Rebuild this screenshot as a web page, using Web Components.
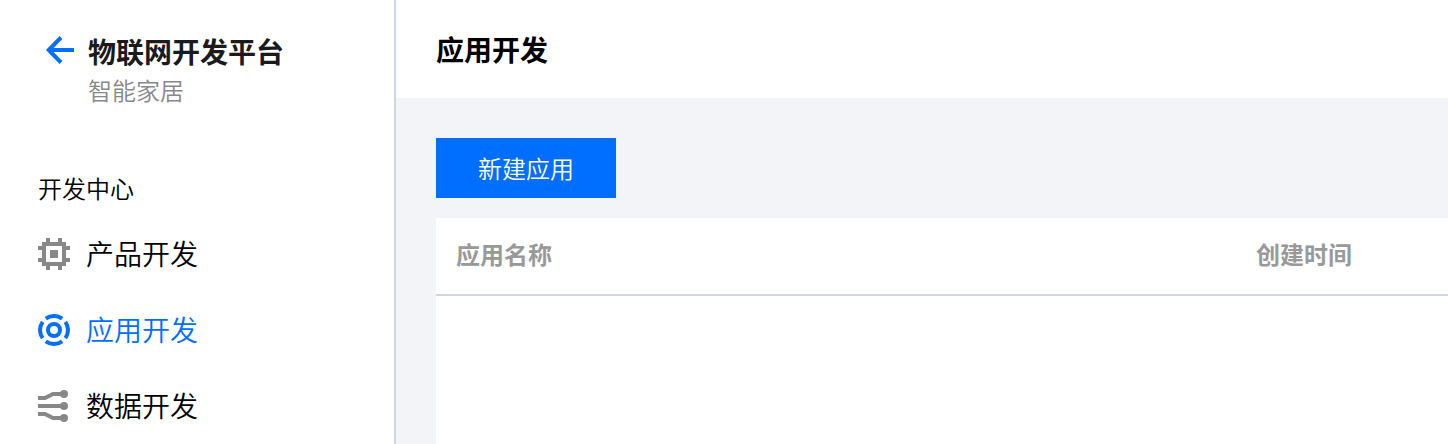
<!DOCTYPE html>
<html lang="zh-CN">
<head>
<meta charset="utf-8">
<title>应用开发</title>
<style>
html,body{margin:0;height:100%;overflow:hidden;background:#fff;font-family:"Noto Sans CJK SC",sans-serif;color:#000}
</style>
</head>
<body>
<iot-console></iot-console>
<script>
const define = (name, html) => customElements.define(name, class extends HTMLElement {
  constructor() {
    super();
    this.attachShadow({mode: 'open'}).innerHTML = html;
  }
});

define('side-header', `
<style>
:host{display:flex;height:106px;box-sizing:border-box;padding:33px 0 0 44px}
svg{display:block;width:32px;height:32px;margin:1px 12px 0 0;flex:none}
h1{margin:0;font-size:28px;line-height:36px;font-weight:700;color:#1b1b1b;white-space:nowrap}
p{margin:4px 0 0;font-size:24px;line-height:34px;font-weight:350;color:#888}
</style>
<svg viewBox="0 0 32 32" fill="none" stroke="#006eff" stroke-width="4"><path d="M30 16H5M17 3.5L4.7 16L17 28.5"/></svg>
<div><h1><slot></slot></h1><p><slot name="sub"></slot></p></div>`);

const icons = {
  chip: '<path fill="currentColor" fill-rule="evenodd" d="M8 0h4v4h8V0h4v4h4v4h4v4h-4v8h4v4h-4v4h-4v4h-4v-4h-8v4H8v-4H4v-4H0v-4h4v-8H0V8h4V4h4zM8 8v16h16V8zM12 12h8v8h-8z"/>',
  target: '<g fill="none" stroke="currentColor" stroke-width="4"><circle cx="16" cy="16" r="6"/><path d="M7.8 4.65A14 14 0 0 1 24.2 4.65M27.35 7.8A14 14 0 0 1 27.35 24.2M24.2 27.35A14 14 0 0 1 7.8 27.35M4.65 24.2A14 14 0 0 1 4.65 7.8"/></g>',
  data: '<path fill="none" stroke="currentColor" stroke-width="4" d="M0 8H7L15 4H26M0 16H26M0 24H7L15 28H26"/><g fill="currentColor"><circle cx="26" cy="4" r="4"/><circle cx="26" cy="16" r="4"/><circle cx="26" cy="28" r="4"/></g>'
};

customElements.define('nav-item', class extends HTMLElement {
  constructor() {
    super();
    this.attachShadow({mode: 'open'}).innerHTML = `
<style>
:host{display:flex;align-items:center;height:76px;padding-left:38px;font-size:28px;line-height:40px}
:host([active]){color:#006eff}
svg{width:32px;height:32px;margin-right:16px;color:#888}
:host([active]) svg{color:#006eff}
span{padding-bottom:2px}
</style>
<svg viewBox="0 0 32 32">${icons[this.getAttribute('icon')] || ''}</svg><span><slot></slot></span>`;
  }
});

define('side-nav', `
<style>
:host{display:block;flex:none;width:396px;box-sizing:border-box;border-right:2px solid #cfd5de;background:#fff}
h2{margin:65px 0 0;padding-left:38px;font-size:24px;line-height:34px;font-weight:350;height:45px;box-sizing:border-box}
nav{font-weight:350}
</style>
<side-header>物联网开发平台<span slot="sub">智能家居</span></side-header>
<h2>开发中心</h2>
<nav><nav-item icon="chip">产品开发</nav-item><nav-item icon="target" active>应用开发</nav-item><nav-item icon="data">数据开发</nav-item></nav>`);

define('page-header', `
<style>
:host{display:flex;align-items:center;height:98px;background:#fff;padding-left:40px}
h1{margin:0;font-size:28px;line-height:40px;font-weight:700}
</style><h1><slot></slot></h1>`);

define('primary-button', `
<style>
:host{display:block;width:180px}
button{display:block;width:100%;height:60px;border:0;padding:0;background:#006eff;color:#fff;font:350 24px/60px "Noto Sans CJK SC",sans-serif}
</style><button><slot></slot></button>`);

define('app-table', `
<style>
:host{display:block;margin-top:20px;height:226px;background:#fff}
div{display:grid;grid-template-columns:800px 1fr;box-sizing:border-box;height:78px;padding-left:20px;border-bottom:2px solid #cfd5de;font-size:24px;line-height:72px;font-weight:700;color:#999}
</style><div><span>应用名称</span><span>创建时间</span></div>`);

define('iot-console', `
<style>
:host{display:flex;height:444px}
main{flex:1;min-width:0;background:#f2f4f8}
section{padding:40px 0 0 40px}
</style>
<side-nav></side-nav>
<main><page-header>应用开发</page-header>
<section><primary-button>新建应用</primary-button><app-table></app-table></section></main>`);
</script>
</body>
</html>
